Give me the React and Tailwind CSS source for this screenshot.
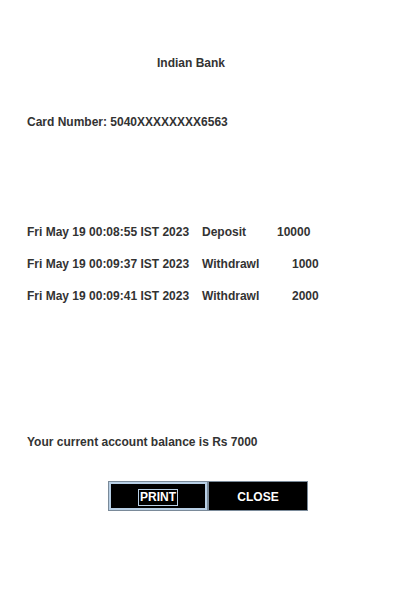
const transactions = [
    { date: 'Fri May 19 00:08:55 IST 2023', type: 'Deposit', amount: '10000', typeWidth: 'w-[75px]' },
    { date: 'Fri May 19 00:09:37 IST 2023', type: 'Withdrawl', amount: '1000', typeWidth: 'w-[90px]' },
    { date: 'Fri May 19 00:09:41 IST 2023', type: 'Withdrawl', amount: '2000', typeWidth: 'w-[90px]' },
];

const App = () => {
    return (
        <div className="w-[400px] h-[600px] bg-white text-[#333333] text-[12px] leading-[16px] font-bold font-['Liberation_Sans',Arial,sans-serif] flex flex-col pt-[55px]">
            <div className="ml-[157px]">Indian Bank</div>

            <div className="ml-[27px] mt-[43px]">Card Number: 5040XXXXXXXX6563</div>

            <div className="ml-[27px] mt-[94px] flex flex-col gap-[16px]">
                {transactions.map((t) => (
                    <div key={t.date} className="flex">
                        <span className="w-[175px]">{t.date}</span>
                        <span className={t.typeWidth}>{t.type}</span>
                        <span>{t.amount}</span>
                    </div>
                ))}
            </div>

            <div className="ml-[27px] mt-[130px]">Your current account balance is Rs 7000</div>

            <div className="ml-[108px] mt-[31px] flex">
                <button className="w-[100px] h-[30px] pt-[2px] bg-black text-white border border-[#7a8a99] shadow-[inset_0_0_0_2px_#b8cfe5] flex items-center justify-center">
                    <span className="border border-[#b8cfe5] px-[1px] leading-[15px]">PRINT</span>
                </button>
                <button className="w-[100px] h-[30px] pt-[2px] bg-black text-white border border-[#7a8a99] flex items-center justify-center">
                    CLOSE
                </button>
            </div>
        </div>
    );
};

export default App;
